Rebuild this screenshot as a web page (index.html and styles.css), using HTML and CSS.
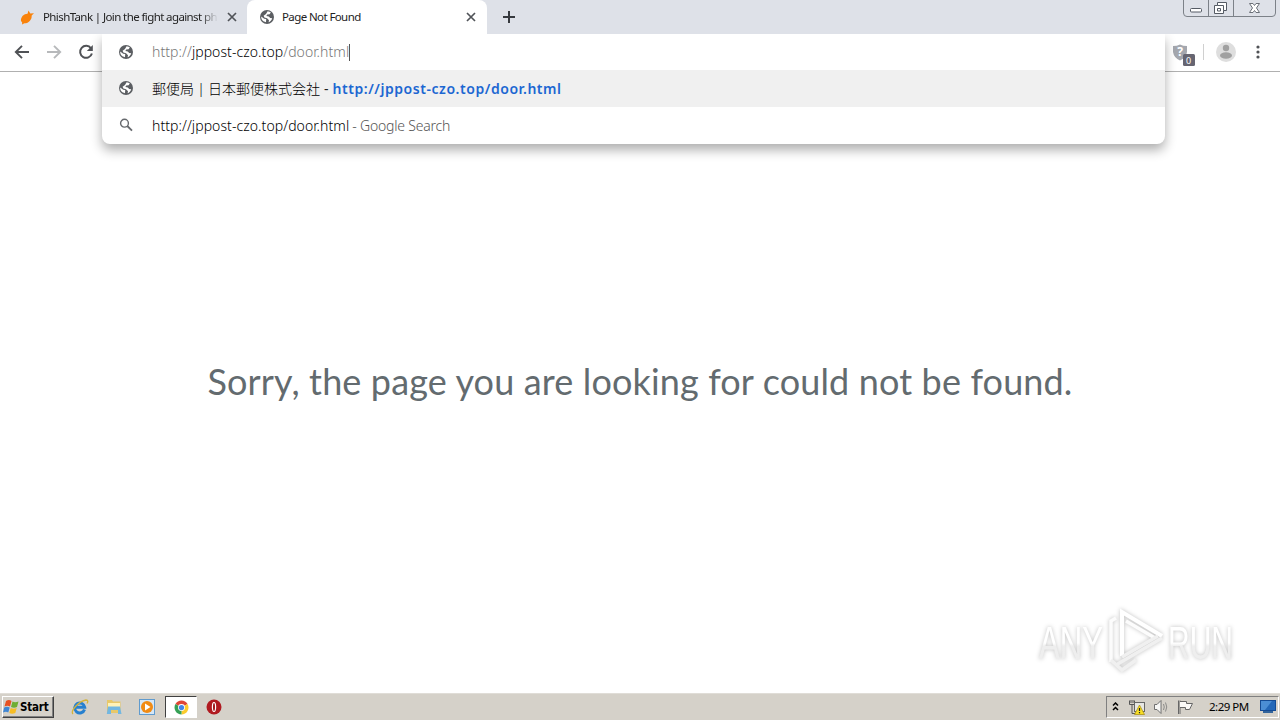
FILE: index.html
```html
<!DOCTYPE html>
<html lang="en">
<head>
  <meta charset="UTF-8">
  <title>Page Not Found</title>
  <link rel="stylesheet" href="styles.css">
</head>
<body>

<!-- shared icons -->
<svg class="defs" width="0" height="0">
  <symbol id="globe" viewBox="0 0 16 16">
    <circle cx="8" cy="8" r="7" fill="#5b5e62"/>
    <path d="M2.2 7.6 L5.2 9.8 L7.2 10 L7 13.2 C4 12.8 2 10.5 2.2 7.6Z M8.6 2.2 C10 2.3 11 2.8 11.8 3.4 L10.6 5.2 L8.2 5.6 L7.4 7 L9.8 7.6 L11.2 9 L13.2 9.2 C12.6 11.2 11.2 12.6 9.6 13.2 L10 11.2 L8 9.2 L5.4 8.6 L4.6 6.8 L7 5 Z" fill="#fff"/>
  </symbol>
  <symbol id="cross" viewBox="0 0 10 10">
    <path d="M1 1 L9 9 M9 1 L1 9" stroke="#505358" stroke-width="1.7" fill="none"/>
  </symbol>
</svg>

<div class="tabs">
  <div class="tab">
    <svg class="favicon" width="16" height="16" viewBox="0 0 16 16">
      <path d="M2 12 C1.500 8 5 4.800 8.500 4.800 L9.500 1.500 L11.300 4.500 L15 4.300 L12.700 6.500 L12.500 9 C11.500 12 8.500 14.500 5.500 14.300 L3 15.500 L3.200 13.500Z" fill="#f9820b"/>
    </svg>
    <span class="title fade">PhishTank | Join the fight against ph</span>
    <svg class="close" width="10" height="10"><use href="#cross"/></svg>
  </div>
  <div class="tab active">
    <svg class="favicon" width="16" height="16"><use href="#globe"/></svg>
    <span class="title">Page Not Found</span>
    <svg class="close" width="10" height="10"><use href="#cross"/></svg>
  </div>
  <svg class="newtab" width="12" height="12" viewBox="0 0 12 12"><path d="M6 0 V12 M0 6 H12" stroke="#36393e" stroke-width="2"/></svg>
  <svg class="winbtns" width="94" height="18" viewBox="0 0 94 18">
    <path d="M.5 0 V13 Q.5 16.5 4 16.5 H89 Q92.5 16.5 92.5 13 V0 M25.5 0 V16 M50.5 0 V16" fill="none" stroke="#7c8188"/>
    <rect x="7.5" y="8.5" width="11" height="3.5" rx="1" fill="#fff" stroke="#555b64"/>
    <path d="M34.5 2.5 H43.5 V10.5 H40.5 V13.500 H31.500 V5.500 H34.500Z" fill="#fff" stroke="#555b64"/>
    <path d="M34.500 5.500 H40.500 V10.500 M34.500 8.500 H37.500 V11 H34.500Z" fill="none" stroke="#555b64"/>
    <path d="M66.500 3.500 H70 L71.500 5.500 L73 3.500 H76.500 L73.500 8 L76.500 12.500 H73 L71.500 10.500 L70 12.500 H66.500 L69.500 8Z" fill="#fff" stroke="#6b7078"/>
  </svg>
</div>

<div class="toolbar">
  <div class="nav">
    <svg width="16" height="16" viewBox="0 0 16 16"><path d="M15 8 H2 M8 1.800 L1.800 8 L8 14.200" fill="none" stroke="#505256" stroke-width="1.900"/></svg>
    <svg width="16" height="16" viewBox="0 0 16 16"><path d="M1 8 H14 M8 1.800 L14.200 8 L8 14.200" fill="none" stroke="#b7b9bb" stroke-width="1.900"/></svg>
    <svg width="16" height="16" viewBox="0 0 16 16"><path d="M13 4.300 A6 6 0 1 0 13.900 9.500" fill="none" stroke="#505256" stroke-width="2"/><path d="M14.800 1 V7 H8.800Z" fill="#505256"/></svg>
  </div>
  <div class="actions">
    <svg class="shield" width="24" height="24" viewBox="0 0 24 24">
      <path d="M2 3 Q6 3 9 1.500 Q12 3 16 3 V9 Q15 15 9 17.500 Q3 15 2 9Z" fill="#a4a7ae"/>
      <text x="9" y="13" class="question">?</text>
      <rect x="12" y="11" width="12" height="12" rx="1.500" fill="#666571"/>
      <text x="17.500" y="20.500" class="count">0</text>
    </svg>
    <span class="sep"></span>
    <svg class="avatar" width="20" height="20" viewBox="0 0 20 20">
      <circle cx="10" cy="10" r="10" fill="#dedede"/>
      <circle cx="10" cy="6" r="3.200" fill="#a0a0a0"/>
      <ellipse cx="10" cy="13.500" rx="6" ry="3.200" fill="#a0a0a0"/>
    </svg>
    <svg class="menu" width="4" height="16" viewBox="0 0 4 16"><g fill="#505256"><circle cx="2" cy="3" r="1.600"/><circle cx="2" cy="8" r="1.600"/><circle cx="2" cy="13" r="1.600"/></g></svg>
  </div>
</div>

<!-- address bar with suggestions, opens over the page -->
<div class="omnibox">
  <div class="row">
    <svg width="16" height="16"><use href="#globe"/></svg>
    <span class="url"><span class="dim">http://</span>jppost-czo.top<span class="dim">/door.html</span></span><span class="caret"></span>
  </div>
  <div class="row selected">
    <svg width="16" height="16"><use href="#globe"/></svg>
    <span class="jp">郵便局<span class="bar">|</span>日本郵便株式会社</span><span class="dash">-</span><b class="link">http://jppost-czo.top/door.html</b>
  </div>
  <div class="row">
    <svg width="16" height="16" viewBox="0 0 16 16"><circle cx="6.500" cy="6.200" r="3.900" fill="none" stroke="#66696d" stroke-width="1.400"/><path d="M9.300 9 L14 13.700" stroke="#66696d" stroke-width="1.800"/></svg>
    <span class="url">http://jppost-czo.top/door.html</span><span class="search">- Google Search</span>
  </div>
</div>

<div class="page">
  <div class="message">Sorry, the page you are looking for could not be found.</div>
  <svg class="watermark" width="220" height="80" viewBox="0 0 220 80">
    <defs>
      <linearGradient id="wm" x1="0" y1="0" x2="0" y2="1"><stop offset=".5" stop-color="#fff"/><stop offset=".56" stop-color="#eee"/></linearGradient>
    </defs>
    <g class="glow">
      <text x="14" y="59" textLength="64" lengthAdjust="spacingAndGlyphs" fill="url(#wm)">ANY</text>
      <text x="143" y="59" textLength="65" lengthAdjust="spacingAndGlyphs" fill="url(#wm)">RUN</text>
      <path d="M97 56 V12 L137 36" fill="none" stroke="#fff" stroke-width="4"/>
      <path d="M91 18 L86 21 V62 M101 21 L130 38" fill="none" stroke="#fcfcfc" stroke-width="3.500"/>
      <path d="M137 38 L91 65 M133 36 L97 57 M86 60 L97 70 L111 60" fill="none" stroke="#f0f0f0" stroke-width="3.500"/>
    </g>
  </svg>
</div>

<div class="taskbar">
  <div class="start">
    <svg width="17" height="16" viewBox="0 0 17 16">
      <path d="M3 2 Q6 0 8.500 2 L7 7.500 Q4.500 6 1.500 7.500Z" fill="#e75122"/>
      <path d="M9.500 2.500 Q12 4 15.500 2.500 L14 8 Q11 9.500 8 8Z" fill="#70ae33"/>
      <path d="M1.200 8.500 Q4 7 6.700 8.500 L5.300 13.500 Q3 12 0 13.500Z" fill="#3f86d3"/>
      <path d="M7.700 9 Q10.500 10.500 13.700 9 L12.300 14 Q9 15.500 6.300 14Z" fill="#f7bd24"/>
    </svg>
    <span>Start</span>
  </div>
  <div class="quick">
    <svg width="18" height="18" viewBox="0 0 18 18">
      <path d="M13.500 11.500 A5 5 0 1 1 13.700 9.300 H5" fill="none" stroke="#2680cf" stroke-width="3"/>
      <path d="M2 16 C-1 13 8 3 15 2 C17.500 2 17 4 16 5.500" fill="none" stroke="#d5b339" stroke-width="1.300"/>
    </svg>
    <svg width="18" height="18" viewBox="0 0 18 18">
      <path d="M2 2 H7 L8 3.500 H15.500 V15 H2Z" fill="#e8c869"/>
      <path d="M3 5 H15 V9 H3Z" fill="#fff2b8"/>
      <path d="M3 8.500 H15 L16.500 16 H13 V12 H6 V16 H1.800Z" fill="#72b7e2"/>
    </svg>
    <svg width="18" height="18" viewBox="0 0 18 18">
      <rect x="1.500" y="1.500" width="15" height="15" fill="#d5e7f7" stroke="#609bce"/>
      <circle cx="9" cy="9" r="6" fill="#f18b14"/>
      <path d="M7 5.500 L12.500 9 L7 12.500Z" fill="#fff"/>
    </svg>
  </div>
  <div class="task">
    <svg width="15" height="15" viewBox="0 0 16 16">
      <path d="M8 8 L1.500 4.300 A7.500 7.500 0 0 1 14.500 4.300Z" fill="#df4636"/>
      <path d="M8 8 L14.500 4.300 A7.500 7.500 0 0 1 8 15.500Z" fill="#fbcb2d"/>
      <path d="M8 8 L8 15.500 A7.500 7.500 0 0 1 1.500 4.300Z" fill="#35a055"/>
      <circle cx="8" cy="8" r="3.700" fill="#fff"/><circle cx="8" cy="8" r="2.800" fill="#4285e8"/>
    </svg>
  </div>
  <svg class="opera" width="16" height="16" viewBox="0 0 16 16"><circle cx="8" cy="8" r="7.500" fill="#b01a20"/><ellipse cx="8" cy="8" rx="2.200" ry="5" fill="#fff"/><ellipse cx="8" cy="8" rx="1" ry="4" fill="#a01318"/></svg>

  <div class="tray">
    <svg width="9" height="11" viewBox="0 0 9 11"><path d="M2 3.500 L4.500 1 L7 3.500 M2 8 L4.500 5.500 L7 8" fill="none" stroke="#000" stroke-width="1.500"/></svg>
    <svg class="net" width="18" height="17" viewBox="0 0 18 17">
      <path d="M1.500 1.500 V5.500 H6.500 V1.500 M3 1 V4 M5 1 V4 M4 6 V14.500 H8" fill="none" stroke="#555"/>
      <rect x="6.500" y="3.500" width="10" height="9" fill="#e7e7e3" stroke="#666"/>
      <path d="M11.500 6 L16.500 15.500 H6.500Z" fill="#f7dd25" stroke="#a38a10" stroke-width=".7"/>
      <path d="M11.500 9 V12 M11.500 13 V14.300" stroke="#222" stroke-width="1.200"/>
    </svg>
    <svg class="sound" width="17" height="16" viewBox="0 0 17 16">
      <path d="M1.500 5.500 H4 L8 1.500 V14.500 L4 10.500 H1.500Z" fill="#f7f7f5" stroke="#707070"/>
      <path d="M10.500 5 Q12 8 10.500 11 M12.500 3.500 Q15 8 12.500 12.500" fill="none" stroke="#8b8b89"/>
    </svg>
    <svg class="flag" width="17" height="16" viewBox="0 0 17 16"><path d="M1.500 1.500 V15 M3 1.500 V15" stroke="#666"/><path d="M3 2.500 H9.500 V4.500 H15.500 L12.500 10.500 H8.500 V8.500 H3" fill="#faf9f7" stroke="#666"/></svg>
    <span class="time">2:29 PM</span>
    <svg class="desk" width="16" height="14" viewBox="0 0 16 14"><rect x=".5" y=".5" width="15" height="10" fill="#2468b8" stroke="#144b94"/><path d="M1 1 H12 L5 10 H1Z" fill="#4b8ed4"/><path d="M3 12 H13" stroke="#33649b" stroke-width="2"/></svg>
  </div>
</div>

</body>
</html>
```
FILE: styles.css
```css
* {
  box-sizing: border-box;
}

body {
  margin: 0;
  width: 1280px;
  height: 720px;
  overflow: hidden;
  position: relative;
  display: flex;
  flex-direction: column;
  background: #fff;
  font-family: "Noto Sans", "Noto Sans CJK JP", sans-serif;
  color: #222;
}

svg {
  display: block;
  flex: none;
}

.defs {
  position: absolute;
}

/* tab strip */
.tabs {
  flex: none;
  height: 34px;
  display: flex;
  background: #dee1e8;
}

.tab {
  width: 247px;
  height: 34px;
  padding: 0 10px 0 19px;
  display: flex;
  align-items: center;
  font-size: 11.5px;
  letter-spacing: -0.6px;
}

.tab.active {
  width: 240px;
  padding: 0 11px 0 12px;
  background: #fff;
  border-radius: 8px 8px 0 0;
}

.title {
  flex: 1;
  margin: 0 9px 2px 7px;
  white-space: nowrap;
}

.fade {
  margin-left: 8px;
  -webkit-mask-image: linear-gradient(to right, #000 90%, transparent);
  mask-image: linear-gradient(to right, #000 90%, transparent);
}

.newtab {
  margin: 11px 0 0 16px;
}

.winbtns {
  margin-left: auto;
  margin-right: 3px;
}

/* toolbar */
.toolbar {
  flex: none;
  height: 38px;
  display: flex;
  justify-content: space-between;
  padding-bottom: 1px;
  border-bottom: 1px solid #b0b0b0;
}

.nav {
  display: flex;
  align-items: center;
  gap: 16px;
  padding-left: 14px;
}

.actions {
  display: flex;
  align-items: center;
  padding-right: 20px;
}

.shield {
  margin-top: 6px;
}

.question {
  font: bold 12px "Noto Sans", sans-serif;
  fill: #fff;
  text-anchor: middle;
}

.count {
  font: 9px "Noto Sans", sans-serif;
  fill: #fff;
  text-anchor: middle;
}

.sep {
  width: 1px;
  height: 16px;
  margin: 0 12px 0 8px;
  background: #d0d0d0;
}

.menu {
  margin-left: 20px;
}

/* address bar */
.omnibox {
  position: absolute;
  left: 102px;
  top: 34px;
  width: 1063px;
  height: 110px;
  background: #fff;
  border-radius: 0 0 8px 8px;
  box-shadow: 0 6px 12px rgba(0, 0, 0, 0.32);
  clip-path: inset(0 -20px -25px -20px);
}

.row {
  height: 37px;
  display: flex;
  align-items: center;
  padding-left: 16px;
  font-size: 14px;
  white-space: pre;
}

.row:first-child {
  height: 36px;
}

.row svg {
  margin-right: 18px;
  margin-bottom: 1px;
}

.selected {
  background: #f0f0f0;
}

.url {
  margin-bottom: 1px;
  letter-spacing: 0.07px;
  font-weight: 300;
  color: #000;
}

.dim {
  color: #777;
}

.caret {
  width: 1px;
  height: 17px;
  background: #555;
}

.jp {
  margin-bottom: 2px;
  font-family: "Noto Sans CJK JP", sans-serif;
  font-weight: 300;
  color: #000;
}

.bar {
  display: inline-block;
  width: 14px;
  text-align: center;
  font-family: "Noto Sans", sans-serif;
}

.dash {
  margin: 0 4px 0 4px;
}

.link {
  color: #1c67d2;
  font-weight: 600;
  letter-spacing: 0.55px;
}

.search {
  margin-left: 3px;
  font-weight: 300;
  letter-spacing: -0.2px;
  color: #555;
}

/* page */
.page {
  flex: 1;
  position: relative;
  display: flex;
  align-items: center;
  justify-content: center;
}

.message {
  margin-bottom: 3px;
  font-family: Lato, sans-serif;
  font-size: 36px;
  letter-spacing: 0.14px;
  color: #636b6f;
  white-space: nowrap;
}

.watermark {
  position: absolute;
  right: 35px;
  bottom: 13px;
}

.watermark text {
  font: 46px "Liberation Sans", sans-serif;
}

.glow {
  filter: drop-shadow(0 0 2px rgba(0, 0, 0, 0.25));
}

/* taskbar */
.taskbar {
  flex: none;
  height: 27px;
  display: flex;
  align-items: center;
  padding-top: 1px;
  background: #d5d1c9;
  box-shadow: inset 0 1px #e0ddd7;
}

.start {
  width: 52px;
  height: 22px;
  margin-left: 2px;
  display: flex;
  align-items: center;
  border: 1px solid;
  border-color: #fff #404040 #404040 #fff;
  box-shadow: inset -1px -1px #808080;
  font: bold 11.5px "DejaVu Sans Condensed", "DejaVu Sans", sans-serif;
  letter-spacing: -0.2px;
  color: #000;
}

.quick {
  display: flex;
  gap: 15.5px;
  margin-left: 17px;
}

.task {
  width: 32px;
  height: 22px;
  margin-left: 9px;
  display: flex;
  align-items: center;
  justify-content: center;
  background: #fff;
  border: 1px solid;
  border-color: #404040 #fff #fff #404040;
}

.opera {
  margin-left: 9px;
}

.tray {
  width: 173px;
  height: 22px;
  margin-left: auto;
  margin-right: 1px;
  padding-left: 4px;
  display: flex;
  align-items: center;
  border: 1px solid;
  border-color: #808080 #fff #fff #808080;
}

.net {
  margin-left: 8px;
}

.sound {
  margin-left: 7px;
}

.flag {
  margin-left: 7px;
}

.time {
  width: 41px;
  margin-left: 15px;
  margin-bottom: 1px;
  font-size: 11.5px;
  letter-spacing: -0.5px;
  white-space: nowrap;
  color: #000;
}

.desk {
  margin-left: 10px;
}
```
